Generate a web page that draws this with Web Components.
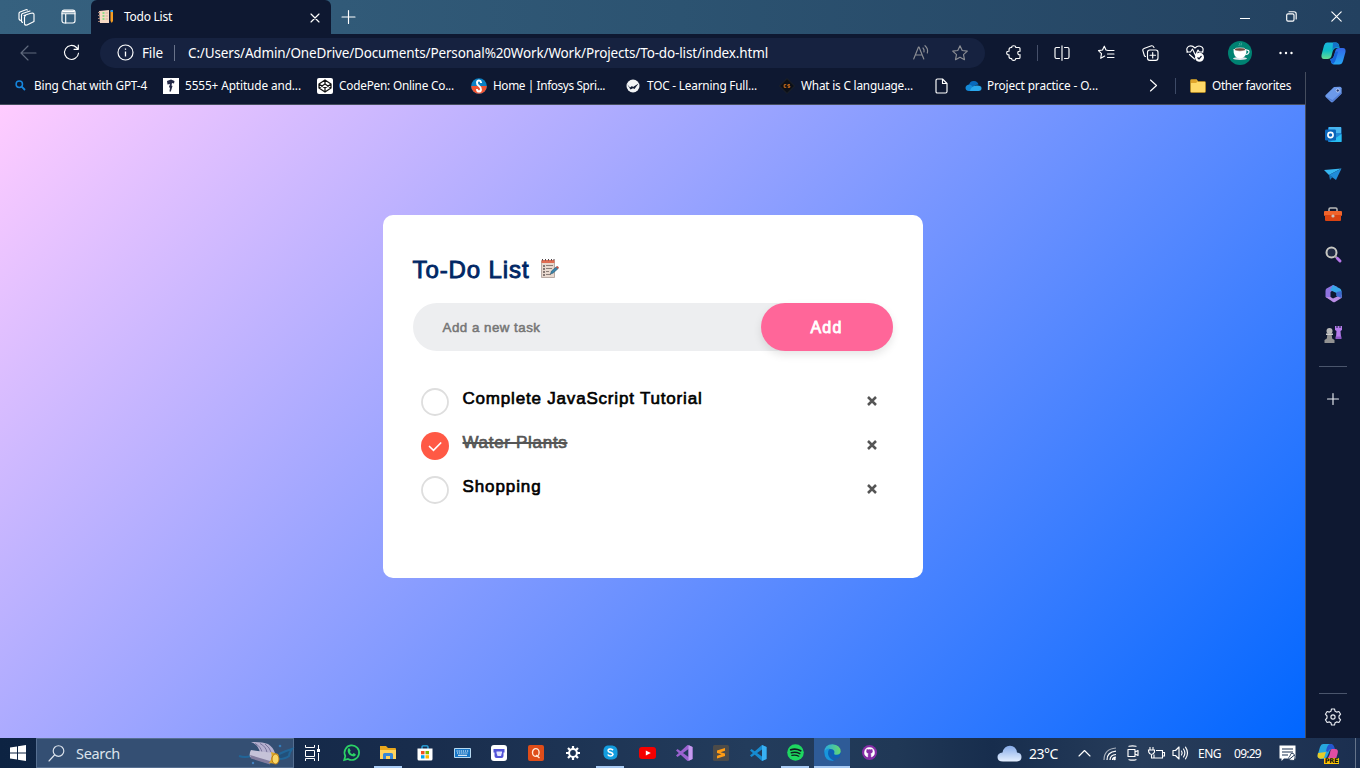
<!DOCTYPE html>
<html lang="en">
<head>
<meta charset="utf-8">
<title>Todo List</title>
<style>
html,body{margin:0;height:100%;overflow:hidden;background:#0e1831}
</style>
</head>
<body>
<desktop-screen></desktop-screen>
<script>
const S='fill="none" stroke="currentColor" stroke-width="1.15" stroke-linecap="round" stroke-linejoin="round"';
const STAR='M8 .8l2.200 4.700 5.100.6-3.800 3.500 1 5.100L8 12.200l-4.500 2.500 1-5.100L.7 6.100l5.100-.6z';
/* name: [width, height, svg body] */
const ICONS={
workspaces:[17,17,`<g ${S}><path d="M6 6.500l6-2 2.500-.5q1.500 0 1.500 1.500v7l-7 3.500q-2 .5-2.500-1V8q0-1 1-1.300z"/><path d="M4.500 13.500l-1-1V6q0-1 1-1.500L12 2M2.300 11.500L1 10V4.500Q1 3.500 2 3l6-2.200q1-.3 1.300.3"/></g>`],
tabs:[15,15,`<g ${S}><rect x="1" y="1" width="13" height="13" rx="2.200"/><path d="M1 4.700h13M4.700 4.700V14" /></g><path d="M1.500 1.500h12v2h-12z" fill="#fff"/>`],
notes:[17,16,`<path d="M1 2l10-1v13H2z" fill="#f5d9c4"/><path d="M0 3h2v1H0zM0 6h2v1H0zM0 9h2v1H0zM0 12h2v1H0z" fill="#a48274"/><path d="M4.500 4h2M4.500 7h2M4.500 10h2" stroke="#6fdc78" stroke-width="1.600"/><path d="M7.500 4h2.500M7.500 7h2.500M7.500 10h2.500" stroke="#d2b19e"/><path d="M12.500 2h2.500v10l-1.200 2-1.300-2z" fill="#f59d22"/><path d="M12.500 1h2.500v2h-2.500z" fill="#2f9be8"/>`],
close:[10,10,`<path ${S} d="M1 1l8 8M9 1L1 9"/>`],
plus:[14,14,`<path ${S} d="M7.500 .5v13M1 7h13"/>`],
sideplus:[12,12,`<path ${S} d="M6 .5v11M.5 6h11"/>`],
min:[10,10,`<path d="M0 5.500h10" stroke="#fff"/>`],
max:[11,11,`<g ${S}><rect x=".7" y="2.800" width="7.300" height="7.300" rx="1.300"/><path d="M3 .7h5q2.200 0 2.200 2.200V8"/></g>`],
winclose:[11,11,`<path ${S} d="M.8.800l9.400 9.400M10.200.8L.8 10.200"/>`],
back:[17,16,`<path ${S} d="M8 1L1 8l7 7M1 8h15"/>`],
reload:[17,17,`<path ${S} d="M15.500 9.200A7 7 0 1 1 13.500 3.500L15 5M15.300 1v4.300H11"/>`],
info:[17,17,`<circle cx="8.500" cy="8.500" r="7.500" ${S}/><path d="M8.500 7.500v5M8.500 4.500v1.300" stroke="#fff" stroke-width="1.300"/>`],
read:[16,15,`<g ${S}><path d="M.7 14L5.500 2h.5l4.800 12M2.300 10h7"/><path d="M10 3q1.500 1.500 1 4M12 .7q3.500 3 2.300 7.300" /></g>`],
star:[16,16,`<path ${S} d="${STAR}"/>`],
ext:[16,16,`<path ${S} d="M3 5Q3 2.500 5 2.500H5.700Q5.500.7 7.700.7t2 1.800H13q1 0 1 1V6.300q-2.200-.3-2.200 1.700t2.200 1.700v2.800q0 1-1 1H9.700q.2 1.800-2 1.800t-2-1.800H5q-2 0-2-2v-1.800Q.7 10 .7 8T3 6.300z"/>`],
split:[16,16,`<path ${S} d="M5.500 2.500H2.500q-1.500 0-1.500 1.500v8q0 1.500 1.500 1.500h3M10.500 2.500h3Q15 2.500 15 4v8q0 1.500-1.500 1.500h-3M8 .7v14.600"/>`],
favs:[17,16,`<path ${S} d="M10 5.500L8 5 6.300 1.200 4.500 5l-4 .6 3 3-.8 4.700 4-2.200M10.500 5.500H16M9.500 9H16M9.500 12.500H16"/>`],
coll:[17,16,`<g ${S}><rect x="5.500" y="5" width="10.500" height="10.300" rx="2.300"/><path d="M10.700 7.500v5.500M8 10.200h5.500M3.500 11.500L2.500 11 .8 5.300Q.5 4 2 3.500L9.500.8Q11 .5 12 2.500"/></g>`],
heart:[19,17,`<g ${S}><path d="M1.500 7Q-.5 3 3 1.300 6 0 9 3q3-3 6-1.500Q18.300 3 16.500 7M3.500 9.500L8.500 14"/><path d="M.7 7h3.800L6.500 4l3 6.500L12 5l1.300 2H17"/></g><circle cx="13.500" cy="12.300" r="4.500" fill="#fff"/><path d="M11.500 12.500l1.500 1.300 2.500-2.800" fill="none" stroke="#0e1831" stroke-width="1.200"/>`],
avatar:[24,24,`<circle cx="12" cy="12" r="12" fill="#008272"/><ellipse cx="12" cy="17.500" rx="7" ry="1.500" fill="#dde2e8"/><path d="M5.500 8h13q.5 9-6.500 9.500Q5 17 5.500 8z" fill="#fff"/><path d="M18.500 9q3 0 2.300 2.500-.8 2.200-3.300 2" fill="none" stroke="#fff" stroke-width="1.200"/><ellipse cx="12" cy="8.500" rx="5.500" ry="1.700" fill="#70493c" stroke="#fff" stroke-width=".6"/><path d="M10.500 5q2-1 1-3M13 4.500q1-2 0-3" stroke="#4bb0a5" fill="none" stroke-width=".8"/>`],
dots:[14,4,`<g fill="#fff"><circle cx="1.500" cy="2" r="1.200"/><circle cx="7" cy="2" r="1.200"/><circle cx="12.500" cy="2" r="1.200"/></g>`],
copilot:[25,23,`<defs><linearGradient id="a" x2="0" y2="1"><stop stop-color="#1ab5de"/><stop offset=".5" stop-color="#0ebdc5"/><stop offset="1" stop-color="#68dc91"/></linearGradient><linearGradient id="b" x2="0" y2="1"><stop stop-color="#3366e8"/><stop offset="1" stop-color="#25a7f4"/></linearGradient></defs><path d="M6 .5h9q2.500 0 3 2.500l.5 3h-3q-3 0-4 4l-1 4q-.8 3-4 3H3Q0 17 .5 13L3 3.500Q4 .5 6 .5z" fill="url(#a)"/><path d="M12 .5h3q2.500 0 3.500 5H15q-2.500 0-3.500 3z" fill="#1472c8"/><path d="M18 6h4q3 0 2.500 4L22 19q-1 3.500-4 3.500h-5q-2.500 0-3-3l-.7-2.500q2.700 0 3.500-3l1.500-5Q15 6 18 6z" fill="url(#b)"/><path d="M9 17.200q3-.2 4-3.200l1.500-4.500h2.700L15 17q-1 3.500-3 5-1.700-.5-2-2.500z" fill="#1664d9"/>`],
bing:[11,11,`<circle cx="4.300" cy="4.300" r="3.200" fill="none" stroke="#1686dd" stroke-width="1.500"/><path d="M6.700 6.700L10 10" stroke="#1686dd" stroke-width="1.800"/>`],
aptitude:[16,16,`<path d="M0 0h16v16H0z" fill="#fff"/><path d="M4 3l4-1.500 3.500 1.500-.5 2.500-2-.5-.5 2.500 1 .5-1.500 5-1 1-.5-1 .5-3-1-1 1-3-2.500.5z" fill="#252a48"/>`],
codepen:[16,16,`<rect width="16" height="16" rx="2" fill="#fff"/><g fill="none" stroke="#111" stroke-width="1.250" stroke-linejoin="round"><path d="M8 2l6 4v4l-6 4-6-4V6zM2 6l6 4 6-4M2 10l6-4 6 4M8 2v4M8 10v4"/></g>`],
infosys:[16,16,`<circle cx="8" cy="8" r="7.800" fill="#0a80c4"/><path d="M.2 8h15.600A7.800 7.800 0 0 1 .2 8z" fill="#ee5331"/><path d="M10 5V4.300Q9.700 2.500 8 2.500T6 4.500 8 8t2 3.500-2 2-2-2V11" stroke="#fff" stroke-width="2" fill="none"/>`],
toc:[14,14,`<circle cx="7" cy="7" r="6.500" fill="#f2f4f6"/><path d="M1 5l3 3.500L6 7l1 1 5.500-3.500L8.500 10 7 9.300 4.500 10.500z" fill="#121c34"/>`],
cs:[16,16,`<path d="M8 .5L15.500 8 8 15.500.5 8z" fill="#0b0f17" stroke="#202328"/><path d="M7.300 6.700H5.200v2.600h2.100M11 6.700H8.900V8H10.800v1.300H8.800" fill="none" stroke="#d67019" stroke-width="1"/>`],
doc:[13,16,`<path ${S} d="M1 2.500Q1 1 2.500 1h5L12 5.500v8q0 1.500-1.500 1.500h-8Q1 15 1 13.500zM7.500 1v4.500H12"/>`],
onedrive:[17,12,`<path d="M4 5Q5 .7 9 1q3.500.2 4.500 3.500-3 0-5 2z" fill="#0869bd"/><path d="M4 11Q.7 11 .5 8q0-3 3.500-3.500 2-.3 5 3L6 11z" fill="#1389d8"/><path d="M5 11q1-5 6-5.500 5.500-.5 5.500 2.800 0 2.700-3 2.700z" fill="#2aa8ee"/>`],
chev:[9,13,`<path ${S} d="M1.500 1l6 5.500-6 5.500"/>`],
folder:[16,15,`<path d="M.5 2.500q0-1 1-1h5L8 3.500h6.500q1 0 1 1v9q0 1-1 1h-13q-1 0-1-1z" fill="#ffd968" stroke="#b98a20" stroke-width=".8"/><path d="M1 2h5.300L7.500 3.700 6 5H1z" fill="#e0a52c"/>`],
tag:[17,17,`<path d="M9 1l6-.2q1.500 0 1.600 1.500v5.500L8 16q-1 .8-2 0l-5.300-5q-1-1 0-2z" fill="#6c99e9"/><path d="M.8 10.500l6.500 5.500 9-8.500v-1.200L7.500 14z" fill="#517bd3"/><circle cx="12.800" cy="4.500" r="1.600" fill="#243b76" stroke="#dbe6ff" stroke-width=".7"/>`],
outlook:[17,17,`<rect x="3" y="1" width="13.500" height="15" rx="1" fill="#1c86d5"/><path d="M4 1h12v6H4z" fill="#47b4ee"/><path d="M5 16l11.500-8v8z" fill="#27bdf1"/><rect y="3.500" width="11" height="11" rx="1.200" fill="#0965ba"/><circle cx="5.500" cy="9" r="2.600" fill="none" stroke="#fff" stroke-width="1.600"/>`],
plane:[18,13,`<path d="M0 2l17.500-1.500L5 7z" fill="#37b7f1"/><path d="M5 7L17.500.5 12 12z" fill="#208cd8"/><path d="M5 7l1 5 2.500-3z" fill="#1675b9"/>`],
toolbox:[18,15,`<path d="M5 5V2.300Q5 1 6.300 1h5.400Q13 1 13 2.300V5" fill="none" stroke="#b8b8b8" stroke-width="1.500"/><rect y="4" width="18" height="5" rx="1" fill="#f0642b"/><path d="M1 8h16v5q0 1-1 1H2q-1 0-1-1z" fill="#d94312"/><circle cx="9" cy="9" r="1.600" fill="#c8c4be"/>`],
search3d:[17,17,`<circle cx="6.500" cy="6.500" r="5" fill="#202a44" stroke="#c7c7c2" stroke-width="2"/><path d="M10 10l1.500 1.500" stroke="#aaa" stroke-width="2"/><path d="M12.300 12.300l2.700 2.700" stroke="#b777e9" stroke-width="3" stroke-linecap="round"/>`],
m365:[17,18,`<path d="M8 0L1.500 3.500Q.5 4 .5 6v6l5 2.500V7l7-5z" fill="#8e73e0"/><path d="M8 0l7 3.500q1.500 1 1.500 3V13l-5-2V8L5 5z" fill="#38a5e8"/><path d="M.7 12L8 17q1 .5 2 0l6.500-4V9.500L8 13.500 5.500 12z" fill="#b98de4"/><path d="M16.500 6v7l-5-2V7z" fill="#3e68cf"/>`],
chess:[18,19,`<path d="M11 1h1.500v2h1V1h2v2h1V1H18v4l-1.500 1 .5 6h-5l.5-6L11 5z" fill="#b57ceb"/><path d="M11.500 11.500h6V14h-6z" fill="#8e59c6"/><circle cx="5.500" cy="6" r="3" fill="#b8b8b8"/><path d="M3.500 8.500h4l.7 5 2.300 1.500v3H.5v-3l2.300-1.500z" fill="#929292"/><path d="M2 8.500h7v1.500H2z" fill="#ccc"/>`],
gear:[18,18,`<path ${S} d="M7.500 1h3l.6 2.300 1.500.8 2.300-.6 1.700 2.700L15 8v2l1.600 1.800-1.700 2.700-2.300-.6-1.500.8-.6 2.300h-3l-.6-2.300-1.500-.8-2.300.6-1.700-2.700L3 10V8L1.400 6.200l1.700-2.700 2.300.6 1.500-.8z"/><circle cx="9" cy="9" r="2.100" ${S}/>`],
memo:[20,22,`<path d="M1.500 3h13v16.500h-13z" fill="#e8d8ce" stroke="#a99b94" stroke-width=".8"/><path d="M1.500 2h13v3h-13z" fill="#df6c52"/><path d="M2 1h1v1.500H2zM5 1h1v1.500H5zM8 1h1v1.500H8zM11 1h1v1.500h-1zM13.500 1h1v1.500h-1z" fill="#514548"/><path d="M3 8h2M3 11h2M3 14h2M3 17h2" stroke="#635756" stroke-width="1.500"/><path d="M6 7.500h7M6 10.500h6M6 13.500h3M6 16.500h5" stroke="#8b7e78"/><path d="M10.500 16l1-3 5-4.300 1.700 1.800-5 4.500z" fill="#3a84ab" stroke="#26566f" stroke-width=".6"/><path d="M16 9.200l1.500-1.200 1.500 1.500-1.300 1.200z" fill="#c65345"/>`],
ring:[28,28,`<circle cx="14" cy="14" r="13" fill="#fff" stroke="#dedede" stroke-width="1.800"/>`],
done:[28,28,`<circle cx="14" cy="14" r="14" fill="#ff5945"/><path d="M8.500 14.500l4 3.800 7.200-7.300" fill="none" stroke="#fff" stroke-width="1.700" stroke-linecap="round"/>`],
del:[12,12,`<path d="M2 2l8 8M10 2l-8 8" stroke="#555" stroke-width="2.500"/>`],
win:[16,16,`<path d="M0 2.500l7-1v6H0zM8 1.300L16 0v7.500H8zM0 8.500h7v6l-7-1zM8 8.500h8V16l-8-1.300z" fill="#fff"/>`],
mag:[17,17,`<circle cx="10.500" cy="6" r="5.300" ${S}/><path ${S} d="M6.500 10L1 16"/>`],
scope:[54,25,`<path d="M0 15q6 2 12 0M40 13q6-3 13-5-3 4-3 7-4 3-10 3" stroke="#1675b1" stroke-width="2" fill="#17527f" opacity=".6"/><path d="M12 1q11-.5 17 2 5 3 7 9l-15 0q-1-8-9-11z" fill="#b5b0cf"/><path d="M16 2.500q6 3 7 9M21 2.500q6 3 7 9M26 3q5 4 6 8" stroke="#77749b" fill="none"/><path d="M12 9q-2 3-1 7l20 7 3-11z" fill="#c5c2d8"/><path d="M11 14l20 6v3.500L12 17.500z" fill="#817b9d"/><path d="M32 11l7 2q2 4-1 10l-8-1q4-5 2-11z" fill="#dda726"/><ellipse cx="36.500" cy="18" rx="3.500" ry="5" fill="#f9d665" stroke="#b67816"/><circle cx="41" cy="5" r="1.300" fill="#347bba"/><circle cx="14" cy="22" r="1.200" fill="#4583c1"/>`],
taskview:[17,16,`<path d="M1.500 0v2.500h9V0M1.500 5.500h9v6h-9zM1.500 16v-2.500h9V16M14.500 0v4M14.500 8v8" fill="none" stroke="#fff"/><path d="M13 4h3v3h-3z" fill="#fff"/>`],
whatsapp:[17,17,`<path d="M1.200 16l1.100-4A7.300 7.300 0 1 1 5 14.900z" fill="none" stroke="#2bd366" stroke-width="1.700"/><path d="M5 4.500l1.500-.3 1.200 2.500-.8 1.200q1 1.800 2.600 2.300l1.100-1.200 2.200 1.200q0 2.200-2.200 2.300Q5.200 11.500 4.600 7z" fill="#2bd366"/>`],
explorer:[18,15,`<path d="M1 1h6l2 2h7q1 0 1 1v9H1z" fill="#e9a71c"/><path d="M1 5h16v9H1z" fill="#ffd45d"/><path d="M4 14V9.500Q4 8 5.500 8h7Q14 8 14 9.500V14h-3v-3H7v3z" fill="#3687d8"/>`],
store:[16,16,`<path d="M5 4V1.800q0-1 1-1h4q1 0 1 1V4" fill="none" stroke="#2bb1ed" stroke-width="1.300"/><path d="M.5 3.500h15V14q0 1.500-1.500 1.500H2Q.5 15.500.5 14z" fill="#fff"/><path d="M4 6h3.500v3.300H4z" fill="#f25022"/><path d="M8.500 6H12v3.300H8.500z" fill="#7fba00"/><path d="M4 10.200h3.500v3.300H4z" fill="#00a4ef"/><path d="M8.500 10.200H12v3.300H8.500z" fill="#ffb900"/>`],
keyboard:[17,10,`<path d="M.5.500h16v9H.5z" fill="#1675c5" stroke="#b7d8f0"/><path d="M2.500 3h12M3 5h11" stroke="#fff" stroke-width="1.200" stroke-dasharray="1.200 .9"/><path d="M4 7.300h9" stroke="#fff"/>`],
tapp:[16,16,`<rect width="16" height="16" rx="3" fill="#fff"/><path d="M2.500 4h11v3.500h-1V11q0 2-2 2h-5q-2 0-2-2V7.500h-1z" fill="#5254d8"/><path d="M5.500 6.500h5.500v1L10 11H6.500L5.500 8z" fill="#e2e3ff"/>`],
qapp:[16,16,`<rect width="16" height="16" rx="2" fill="#df4d19"/><ellipse cx="7.800" cy="7.500" rx="3.300" ry="3.900" fill="none" stroke="#ffe8d7" stroke-width="1.400"/><path d="M8 10l3.500 3" stroke="#ffe8d7" stroke-width="1.400"/>`],
settings:[14,14,`<circle cx="7" cy="7" r="3.900" fill="none" stroke="#fff" stroke-width="2"/><g stroke="#fff" stroke-width="2.200"><path d="M7 0v3M7 11v3M0 7h3M11 7h3M2 2l2.200 2.200M9.800 9.800L12 12M12 2L9.800 4.200M2 12l2.200-2.200"/></g>`],
skype:[15,15,`<path d="M4.500.5h5q5 1 5 6v3q-.5 4.500-5 5h-4q-4.500-1-5-5V5q.5-4 4-4.500z" fill="#139ddf"/><path d="M10 5.200Q9 3.700 7 4 4.800 4.300 5.200 6q.3 1 2.400 1.400T10 9.500q-.5 1.500-2.500 1.500T4.800 9.500" fill="none" stroke="#fff" stroke-width="1.600"/>`],
youtube:[17,12,`<rect width="17" height="12" rx="3" fill="#f50000"/><path d="M6.800 3.500l5 2.500-5 2.500z" fill="#fff"/>`],
vs:[17,16,`<path d="M11.500 0L16.500 2v12l-5 2L0 5.500 1.500 4 12.500 12V4L1.500 12 0 10.500z" fill="#9b62d0"/><path d="M12.500 0l4 2v12l-4 2z" fill="#c69af0"/>`],
sublime:[16,16,`<rect width="16" height="16" rx="1.500" fill="#4c4b49"/><path d="M4 5.500L12 3v2.800L7.500 7.300 12 8.500v2.500L4 13.500v-2.800l4.500-1.400L4 8z" fill="#ff9c14"/>`],
vscode:[17,16,`<path d="M12 0l4.500 2v12L12 16 0 5.500 1.500 4 12 11.500V4.500L1.500 12 0 10.500z" fill="#168bd0"/><path d="M12 0l4.500 2v12L12 16z" fill="#39b1f3"/>`],
spotify:[17,17,`<circle cx="8.500" cy="8.500" r="8.300" fill="#1ed760"/><g fill="none" stroke="#101d20" stroke-linecap="round"><path d="M3.700 5.800q5-1.600 10 .9" stroke-width="1.800"/><path d="M4.300 8.700q4.500-1.200 8.500.9" stroke-width="1.500"/><path d="M4.800 11.400q3.800-.9 7 .8" stroke-width="1.200"/></g>`],
edge:[17,17,`<defs><linearGradient id="e"><stop stop-color="#2aa9e0"/><stop offset="1" stop-color="#64d96f"/></linearGradient></defs><circle cx="8.500" cy="8.500" r="8.200" fill="#0c61b8"/><path d="M.3 8Q.5.5 8.500.3q8 .5 8.200 7.500-.7 3-4 3-3 0-2.500-1.500 1-2.500-2-4Q3.500 4 .3 8z" fill="url(#e)"/><path d="M.3 8q2-4 5.500-3.500Q3.500 7 4 10q.8 4.500 6 6.600Q.5 17.500.3 8z" fill="#1896dc"/><path d="M8 8q-2 4 2 5.500 3 1 6-.8-1 1.500-3 3-6-.7-7-4.500Q6 9 8 8z" fill="#2e5b97" opacity=".55"/>`],
github:[15,15,`<circle cx="7.500" cy="7.500" r="7.500" fill="#862da7"/><path d="M7.500 2.500a4.900 4.900 0 0 1 1.800 9.500V10q0-.8-.5-1.200 2.200-.4 2.200-2.500 0-.8-.5-1.300.2-.7-.1-1.300-.7 0-1.400.5-1.500-.4-3 0-.7-.5-1.400-.5-.3.600-.1 1.300-.5.500-.5 1.300 0 2.100 2.200 2.500-.5.400-.5 1.200v2a4.900 4.900 0 0 1 1.800-9.500z" fill="#fff" stroke="#fff" stroke-width=".5"/>`],
cloud:[25,17,`<defs><linearGradient id="c" x2="0" y2="1"><stop stop-color="#85aae8"/><stop offset="1" stop-color="#e4efff"/></linearGradient></defs><path d="M6 16.500q-5.500 0-5.500-4.500Q.5 8 5.500 7.500 7 .7 13 .7T20 7.500q4.500.3 4.500 4.500T20 16.500z" fill="url(#c)"/>`],
up:[13,8,`<path ${S} d="M1 7l5.500-5.500L12 7"/>`],
wifi:[14,14,`<g fill="none" stroke="#fff" stroke-width="1.200"><path d="M1 13Q1 2 13 1" opacity=".6"/><path d="M4 13Q4 5 13 4.200M7 13q0-5 6-5.500M9.500 13q0-2.500 3.500-2.800"/></g><circle cx="11.500" cy="12" r="1.300" fill="#fff"/>`],
cam:[12,16,`<path ${S} d="M1 4.500h7v7H1zM8 7l3-1.500v5L8 9M2 1.300q3.500-1 7 0M2 14.700q3.500 1 7 0"/>`],
battery:[17,13,`<path d="M8 3.500h6.500v7.500H6V7.500M15 5.500h1.500v3.500H15M2 0v2.500M5 0v2.500M.5 3h6v2q-1 2.500-3 2.500T.7 5zM3.500 7v4H6" fill="none" stroke="#fff" stroke-width="1.100"/>`],
volume:[17,14,`<path ${S} d="M1 4.500h2.500l3.500-3.500v12L3.500 9.500H1zM9.500 5q1.300 2 0 4M11.500 3q2.700 4 0 8M13.500 1.200q4 5.800 0 11.600"/>`],
notif:[17,16,`<path d="M.5.500h16v13H5L2.500 16v-2.500h-2z" fill="#fff"/><path d="M3 4h11M3 7h11M3 10h6" stroke="#1b3151" stroke-width="1.200"/><path d="M10 15q-1-3 1-4l1-2.500h2.500L16 11.500q0 3-1 4z" fill="#fff" stroke="#1b3151" stroke-width=".8"/><path d="M10 14.500l5.500-4.500" stroke="#1b3151"/>`],
copre:[22,21,`<path d="M6 1h7q3 0 4 4l-4 2-3 7q-1 2-4 2Q0 16 .7 12L3 4q1-3 3-3z" fill="#27a7de"/><path d="M1 10l8-1-2 6q-6 2-6.500-2z" fill="#e6cc28"/><path d="M13 1h2q2 1 3 5h-4q-2 0-3 3L9 8q1-6 4-7z" fill="#2556cf"/><path d="M15 6h3q4 0 2.500 5L19 16H9q3-1 4-6 .5-4 2-4z" fill="#e34da2"/>`]
};
class UiIcon extends HTMLElement{
  connectedCallback(){
    const [w,h,b]=ICONS[this.getAttribute('name')];
    this.attachShadow({mode:'open'}).innerHTML=`<style>:host{display:block;flex:none}svg{display:block;overflow:visible}</style><svg width="${w}" height="${h}" viewBox="0 0 ${w} ${h}">${b}</svg>`;
  }
}
customElements.define('ui-icon',UiIcon);

/* Single line of text, tracked so that its advance equals the w attribute. */
class UiLabel extends HTMLElement{
  connectedCallback(){
    this.attachShadow({mode:'open'}).innerHTML=`<style>:host{display:block;flex:none;white-space:nowrap}span{display:inline-block}:host([struck]) span{text-decoration:line-through;text-decoration-thickness:1.500px}</style><span><slot></slot></span>`;
    const s=this.shadowRoot.querySelector('span'), w=+this.getAttribute('w');
    this.style.width=w+'px';
    s.style.letterSpacing=((w-s.getBoundingClientRect().width)/this.textContent.length)+'px';
  }
}
customElements.define('ui-label',UiLabel);

/* Lays out [left edge, width, markup] entries as flex items separated by their gaps. */
const row=(items,start=0)=>{let e=start;return items.map(([x,w,m,dy])=>{const g=x-e;e=x+w;return `<div class="i" style="margin-left:${g}px;width:${w}px${dy?`;margin-top:${dy*2}px`:''}">${m}</div>`}).join('')};
const ic=(x,n,dy,st)=>[x,ICONS[n][0],`<ui-icon name="${n}"${st?` style="${st}"`:''}></ui-icon>`,dy];
const tx=(x,w,t,dy)=>[x,w,`<ui-label w="${w}">${t}</ui-label>`,dy];
const vl=(x,h,c)=>[x,1,`<div style="height:${h}px;background:${c}"></div>`];
const ROW='.i{flex:none}';
const define=(name,css,html)=>customElements.define(name,class extends HTMLElement{
  connectedCallback(){this.attachShadow({mode:'open'}).innerHTML=`<style>*{box-sizing:border-box}${ROW}${css}</style>${html}`}
});

define('tab-strip',`:host{display:flex;height:34px;color:#fff;font:12px "Noto Sans",sans-serif;background:linear-gradient(90deg,#36617f,#2c5371 50%,#234160)}
.a,.b,.tab{display:flex;align-items:center;height:34px}.a{width:91px}.b{flex:1}
.tab{width:240px;background:#0e1831;border-radius:6px 6px 0 0}`,
`<div class="a">${row([ic(18,'workspaces'),ic(61,'tabs',-.5)])}</div><div class="tab">${row([ic(98,'notes'),tx(124,48,'Todo List',-.5),ic(310,'close',.5)],91)}</div><div class="b">${row([ic(341,'plus'),ic(1240,'min',.5),ic(1286,'max',-.5),ic(1331,'winclose',-.5)],331)}</div>`);

define('tool-bar',`:host{display:flex;align-items:center;height:38px;background:#0e1831;color:#fff;font:13.500px "Noto Sans",sans-serif}
.field{display:flex;align-items:center;margin-left:19px;width:885px;height:30px;border-radius:15px;background:#162240}`,
`${row([ic(20,'back',-.5,'color:#606a7e'),ic(63,'reload',-.5)],0)}<div class="field" style="margin-left:20px">${row([ic(117,'info',-.5),tx(142,21,'File'),vl(174,16,'#69738a'),tx(188,580,'C:/Users/Admin/OneDrive/Documents/Personal%20Work/Work/Projects/To-do-list/index.html'),ic(913,'read',-1,'color:#8c8e94'),ic(952,'star',0,'color:#8c8e94')],100)}</div>${row([ic(1006,'ext'),vl(1037,16,'#46506a'),ic(1054,'split'),ic(1098,'favs'),ic(1142,'coll'),ic(1186,'heart',.5),[1228,24,'<ui-icon name="avatar"></ui-icon>'],ic(1279,'dots'),ic(1321,'copilot')],985)}`);

define('favorites-bar',`:host{display:flex;align-items:center;height:33px;padding-bottom:5px;box-sizing:border-box;border-bottom:1px solid #454d5e;background:#0e1831;color:#fff;font:11.800px "Noto Sans",sans-serif}`,
row([ic(15,'bing'),tx(34,113,'Bing Chat with GPT-4',-.5),ic(163,'aptitude'),tx(185,116,'5555+ Aptitude and...',-.5),ic(317,'codepen'),tx(339,115,'CodePen: Online Co...',-.5),ic(471,'infosys'),tx(493,112,'Home | Infosys Spri...',-.5),ic(626,'toc'),tx(647,110,'TOC - Learning Full...',-.5),ic(779,'cs'),tx(801,112,'What is C language...',-.5),ic(935,'doc'),ic(965,'onedrive'),tx(987,111,'Project practice - O...',-.5),ic(1149,'chev'),vl(1175,16,'#3d4a66'),ic(1190,'folder'),tx(1212,79,'Other favorites',-.5)]));

define('side-bar',`:host{display:grid;justify-items:center;align-content:space-between;height:666px;width:55px;box-sizing:border-box;border-left:1px solid #454d5e;background:#0e1831;color:#e8ebf1}
.top{display:grid;justify-items:center;padding-top:2px}.apps{display:grid;grid-auto-rows:40px;place-items:center}.line{width:28px;height:1px;background:#4a556c}
.top .line{margin:12px 0 26px}.bot{display:grid;justify-items:center;gap:14px;padding-bottom:12px}`,
`<div class="top"><div class="apps">${['tag','outlook','plane','toolbox','search3d','m365','chess'].map(n=>`<ui-icon name="${n}"></ui-icon>`).join('')}</div><div class="line"></div><ui-icon name="sideplus"></ui-icon></div><div class="bot"><div class="line"></div><ui-icon name="gear"></ui-icon></div>`);

customElements.define('todo-task',class extends HTMLElement{
  connectedCallback(){
    const on=this.hasAttribute('checked');
    this.attachShadow({mode:'open'}).innerHTML=`<style>:host{display:flex;height:44px;padding:8px 14.500px 8px 8px;box-sizing:border-box}
    ui-label{margin:0 0 0 14px;line-height:22px;-webkit-text-stroke:.65px currentColor}.del{margin:7px 0 0 auto}
    .on{color:#555}</style>
    <ui-icon name="${on?'done':'ring'}"></ui-icon><ui-label ${on?'class="on" struck':''} w="${this.getAttribute('w')}">${this.textContent}</ui-label><ui-icon class="del" name="del"></ui-icon>`;
  }
});
define('todo-app',`:host{display:block;width:540px;height:363px;margin:110px auto 0;padding:40px 30px;box-sizing:border-box;background:#fff;border-radius:10px;font-family:"Liberation Sans",Arial,sans-serif;color:#000}
h2{display:flex;align-items:center;gap:10px;margin:0 0 20px;height:28px;font-size:24px;font-weight:400;color:#002765;-webkit-text-stroke:.9px currentColor}
h2 ui-label{margin-top:2px}
.row{display:flex;align-items:center;height:48px;border-radius:30px;background:#edeef0;padding-left:30px;margin-bottom:29px;font-size:13.333px;color:#757575;-webkit-text-stroke:.5px currentColor}
.add{display:grid;place-items:center;width:132px;height:48px;margin-left:auto;border-radius:40px;background:#ff6699;box-shadow:0 4px 8px rgba(0,0,0,.1);color:#fff;font-size:16px;padding-top:1px;-webkit-text-stroke:.8px currentColor}
.list{font-size:17px}`,
`<h2><ui-label w="117">To-Do List</ui-label><ui-icon name="memo"></ui-icon></h2>
<div class="row"><ui-label w="98">Add a new task</ui-label><div class="add"><ui-label w="32">Add</ui-label></div></div>
<div class="list"><todo-task w="240">Complete JavaScript Tutorial</todo-task><todo-task checked w="105">Water Plants</todo-task><todo-task w="79">Shopping</todo-task></div>`);

const apps=[['whatsapp',351],['explorer',388,1],['store',425],['keyboard',462],['tapp',499],['qapp',536],['settings',573],['skype',610,1],['youtube',647],['vs',684],['sublime',721],['vscode',758],['spotify',795,1],['edge',832,2],['github',869]];
define('task-bar',`:host{display:flex;align-items:center;height:30px;color:#fff;font:12px "Noto Sans",sans-serif;background:linear-gradient(90deg,#0d2342,#182c4c 30%,#233c5c 55%,#203856 66%,#172d4d 73%,#273d5b 84%,#1b2f50)}
.s{display:flex;align-items:center;width:258px;height:30px;margin-left:10px;background:#344f73;border:1px solid #566f91;font-size:14.500px;color:#dce3ec}
.app{display:grid;place-items:center;width:28px;height:30px;border-bottom:2px solid transparent;padding-top:1px}
.r{border-color:#a9cbf4}.act{width:36px;background:#2e5b97}
.pre{display:grid;width:22px}.pre>*{grid-area:1/1}.pre b{place-self:end;background:#ffc400;color:#111;font:bold 6.500px/6px "DejaVu Sans",sans-serif;width:15px;text-align:center;height:6px;letter-spacing:-.2px}`,
`${row([ic(10,'win')])}<div class="s">${row([ic(48,'mag'),tx(76,44,'Search'),ic(239,'scope')],37)}</div>${row([ic(304,'taskview'),
...apps.map(([n,c,s])=>{const w=s==2?36:28;return [c-w/2,w,`<div class="app ${s?'r':''} ${s==2?'act':''}"><ui-icon name="${n}"></ui-icon></div>`]}),
ic(997,'cloud'),tx(1029,29,'<span style="font-size:14px">23°C</span>'),ic(1078,'up'),ic(1103,'wifi',.5),ic(1127,'cam'),ic(1148,'battery'),ic(1172,'volume'),tx(1198,23,'ENG'),tx(1234,27,'09:29'),ic(1279,'notif'),[1317,22,'<div class="pre"><ui-icon name="copre"></ui-icon><b>PRE</b></div>'],vl(1355,30,'#65748a')],294)}`);

define('desktop-screen',`:host{display:grid;grid-template-rows:34px 38px 666px 30px;width:1360px;height:768px;overflow:hidden}
.mid{display:grid;grid-template-columns:1305px 55px}
.left{display:grid;grid-template-rows:33px 633px}
.page{background:linear-gradient(135deg,#ffccff,#0066ff)}`,
`<tab-strip></tab-strip><tool-bar></tool-bar><div class="mid"><div class="left"><favorites-bar></favorites-bar><div class="page"><todo-app></todo-app></div></div><side-bar></side-bar></div><task-bar></task-bar>`);
</script>
</body>
</html>
